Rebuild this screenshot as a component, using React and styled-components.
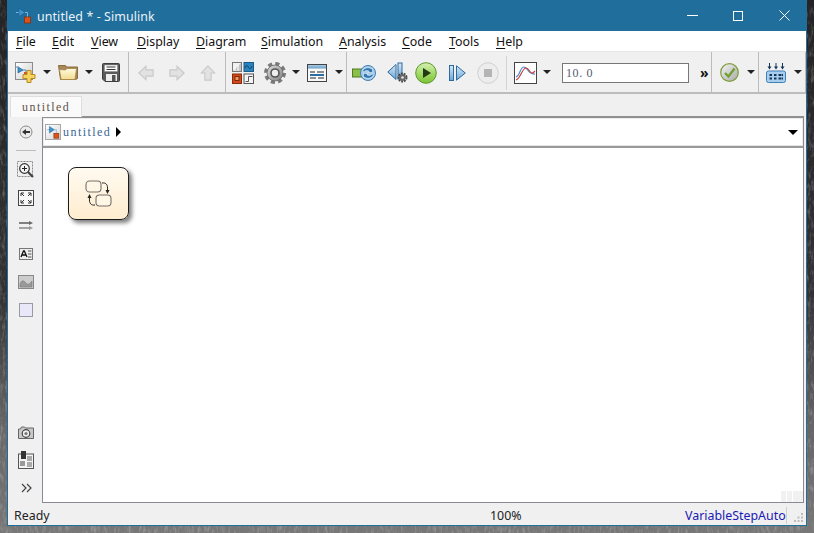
import React from "react";
import styled, { createGlobalStyle } from "styled-components";

const Global = createGlobalStyle`
  html, body { margin: 0; padding: 0; width: 814px; height: 533px; overflow: hidden; background: #444; }
  * { box-sizing: border-box; }
`;

const UI = `"Noto Sans", "Open Sans", sans-serif`;
const SIM = `"Liberation Serif", serif`;

const Desktop = styled.div`
  position: relative; width: 814px; height: 533px; overflow: hidden; padding-left: 7px;
`;
const WallpaperSvg = styled.svg`position: absolute; inset: 0;`;
const Win = styled.div`
  position: relative; width: 800px; height: 526px; display: flex; flex-direction: column;
  background: #f0f0f0; border: 1px solid #1f6e9c; border-top: 0;
`;
const TitleBar = styled.div`
  height: 31px; flex: none; background: #1f6e9c; display: flex; align-items: center; padding-left: 9px; margin: 0 -1px;
  color: #eaf2f7; font: 12.4px ${UI};
`;
const TitleText = styled.span`margin: 1px 0 0 5px; flex: 1; letter-spacing: 0.1px;`;
const WinButton = styled.span`
  width: 46px; height: 31px; display: flex; align-items: center; justify-content: center; flex: none;
`;
const MenuBar = styled.nav`
  height: 20px; flex: none; background: #fff; display: flex; align-items: center; padding-left: 8px;
  font: 12.4px ${UI}; color: #111;
`;
const MenuItem = styled.span`
  width: ${p => p.$w}px; flex: none;
  u { text-underline-offset: 2px; text-decoration-thickness: 1px; }
`;
const Toolbar = styled.div`
  height: 43px; flex: none; display: flex; background: #f0f0f0; border-top: 1px solid #e6e6e6; border-bottom: 2px solid #bcbcbc;
`;
const ToolGroup = styled.div`
  width: ${p => p.$w}px; flex: none; display: flex; align-items: center; padding-top: 1px; border-right: 1px solid #bcbcbc;
`;
const Tool = styled.svg`
  flex: none; margin-left: ${p => p.$ml || 0}px; display: block;
`;
const Caret = styled.span`
  flex: none; margin-left: ${p => p.$ml}px; width: 0; height: 0; margin-top: -1px;
  border-left: 4px solid transparent; border-right: 4px solid transparent; border-top: 4px solid #222;
`;
const ShortDivider = styled.span`
  flex: none; margin-left: 7px; width: 1px; height: 34px; background: #d4d4d4;
`;
const TimeInput = styled.div`
  flex: none; margin-left: 11px; width: 127px; height: 20px; border: 1px solid #777; background: #fff;
  font: 12px ${SIM}; color: #555b6e; padding-left: 3px; line-height: 18px; letter-spacing: 0.6px;
`;
const More = styled.span`
  flex: none; margin-left: 11px; font: bold 14px ${UI}; color: #111; width: 9px; line-height: 14px;
`;
const TabStrip = styled.div`height: 22px; flex: none; padding-left: 2px; display: flex; align-items: flex-start;`;
const Tab = styled.div`
  width: 72px; height: 21px; margin-top: 2px; background: #fafafa; border: 1px solid #dedede; border-bottom: 0;
  font: 12px ${SIM}; letter-spacing: 1.45px; color: #5f5347; padding: 3px 0 0 11px; position: relative; z-index: 1;
`;
const Main = styled.div`flex: 1; min-height: 0; display: flex;`;
const Palette = styled.aside`
  width: 34px; flex: none; display: flex; flex-direction: column; align-items: center; padding: 2px 0 1px 2px;
`;
const PaletteCell = styled.div`
  height: 28px; flex: none; width: 100%; display: flex; align-items: center; justify-content: center;
`;
const PaletteRule = styled.div`width: 20px; height: 1px; background: #bdbdbd; margin: 4px 0 5px; flex: none;`;
const Spacer = styled.div`flex: 1;`;
const Editor = styled.div`
  width: 762px; flex: none; display: flex; flex-direction: column;
  border: 1px solid #8a8a94; border-top: 2px solid #909090;
`;
const Breadcrumb = styled.div`
  height: 28px; flex: none; background: #fff; display: flex; align-items: center; padding-left: 1px; padding-right: 4px;
  border: 1px solid #ececec; border-bottom: 1px solid #e4e4e4;
`;
const CrumbLogo = styled.span`
  width: 16px; height: 16px; flex: none; border: 1px solid #a8a8a8; background: linear-gradient(135deg, #fff, #d8d8d8);
  display: flex; align-items: center; justify-content: center;
`;
const CrumbText = styled.span`
  font: 12px ${SIM}; letter-spacing: 1.45px; color: #3a6694; margin-left: 2px;
`;
const CrumbArrow = styled.span`
  margin-left: 5px; width: 0; height: 0; border-top: 5px solid transparent; border-bottom: 5px solid transparent; border-left: 5px solid #000;
`;
const CrumbDrop = styled.span`
  margin-left: auto; width: 0; height: 0; border-left: 5px solid transparent; border-right: 5px solid transparent; border-top: 5px solid #000;
`;
const Canvas = styled.div`
  flex: 1; background: #fff; position: relative; border-top: 2px solid #9a9a9a; padding: 19px 0 0 25px;
`;
const ChartBlock = styled.div`
  width: 61px; height: 53px; border: 1px solid #1c1c1c; border-radius: 8px;
  background: linear-gradient(#fffaf0, #ffedcf); box-shadow: 3px 3px 4px #7d7d7d;
  display: flex; align-items: center; justify-content: center;
`;
const ViewMark = styled.div`
  position: absolute; right: 0; bottom: 0; display: flex; gap: 1px;
`;
const ViewMarkCell = styled.span`width: ${p => p.$w}px; height: 11px; background: #f1f1f1;`;
const StatusBar = styled.footer`
  height: 22px; flex: none; display: flex; align-items: center; font: 12.4px ${UI}; color: #222; padding: 2px 0 0 6px; position: relative;
`;
const Ready = styled.span`width: 476px; flex: none;`;
const Zoom = styled.span`width: 195px; flex: none;`;
const Solver = styled.span`color: #1a1ab4; width: 102px; flex: none; border-right: 1px solid #d0d0d0; white-space: nowrap;`;
const Grip = styled.svg`margin-left: 7px; margin-top: 5px; flex: none;`;

const Wallpaper = () => (
  <WallpaperSvg width="814" height="533">
    <defs>
      <linearGradient id="wp" x1="0" y1="0" x2="0" y2="1">
        <stop offset="0" stopColor="#242426" />
        <stop offset="0.55" stopColor="#323234" />
        <stop offset="0.8" stopColor="#666" />
        <stop offset="1" stopColor="#777" />
      </linearGradient>
      <filter id="grain" x="0" y="0" width="100%" height="100%">
        <feTurbulence type="fractalNoise" baseFrequency="0.35 0.12" numOctaves="3" seed="4" />
        <feColorMatrix values="0 0 0 0 0.85  0 0 0 0 0.85  0 0 0 0 0.85  1.6 0 0 0 -0.75" />
      </filter>
    </defs>
    <rect width="814" height="533" fill="url(#wp)" />
    <rect width="814" height="533" filter="url(#grain)" opacity="0.4" />
  </WallpaperSvg>
);

const SimLogo = ({ size = 16 }) => (
  <svg width={size} height={size} viewBox="0 0 16 16">
    <path d="M0 4.500h4" stroke="#7fb4d8" strokeWidth="1" />
    <path d="M3 0.500 L9 4.500 L3 8.500Z" fill="#3f94cf" stroke="#1c5f92" strokeWidth="0.6" />
    <path d="M9 4.500h2.500v4.500" stroke="#7fb4d8" fill="none" strokeWidth="1" />
    <rect x="8.500" y="9" width="6" height="6" fill="#d9541e" stroke="#8c2c08" strokeWidth="0.8" />
  </svg>
);

const NewModelIcon = () => (
  <Tool $ml={7} width="21" height="21" viewBox="0 0 21 21">
    <defs><linearGradient id="nm" x1="0" y1="0" x2="1" y2="1"><stop offset="0" stopColor="#fff" /><stop offset="1" stopColor="#cfcfcf" /></linearGradient></defs>
    <rect x="0.5" y="0.5" width="17" height="17" fill="url(#nm)" stroke="#8a8a8a" />
    <path d="M3 5 L8 8 L3 11Z" fill="#3a94d0" stroke="#1c5f92" strokeWidth="0.7" />
    <path d="M1 5h3M8 8h3v2" stroke="#4f8fbf" fill="none" />
    <rect x="9" y="10" width="4" height="3" fill="#d6532a" />
    <path d="M12 8.5h4v4h4v4h-4v4h-4v-4H8v-4h4z" fill="#f7d360" stroke="#b98a1e" />
  </Tool>
);
const FolderIcon = () => (
  <Tool $ml={7} width="20" height="15" viewBox="0 0 20 15">
    <defs><linearGradient id="fo" x1="0" y1="0" x2="0" y2="1"><stop offset="0" stopColor="#fffbe0" /><stop offset="1" stopColor="#f2dc8f" /></linearGradient></defs>
    <path d="M0.500 0.500h7l1 1.500h11v11.500L17.500 14.500h-15z" fill="#a8875a" stroke="#8a6d3c" />
    <path d="M1.500 4.500 L7.500 5 9 3.500 18.500 3.500 17 14.500H3z" fill="url(#fo)" stroke="#a5854a" strokeWidth="0.8" />
  </Tool>
);
const SaveIcon = () => (
  <Tool $ml={9} width="18" height="19" viewBox="0 0 18 19">
    <path d="M0.5 1.5a1 1 0 0 1 1-1h15a1 1 0 0 1 1 1v16a1 1 0 0 1-1 1H3l-2.500-2.500z" fill="#5a5a5a" stroke="#3e3e3e" />
    <rect x="2.500" y="2" width="13" height="6.500" fill="#fff" stroke="#888" strokeWidth="0.500" />
    <path d="M4.500 4h9M4.500 6.500h9" stroke="#333" />
    <rect x="4" y="11" width="11" height="7" fill="#ededed" />
    <rect x="10" y="12" width="3.500" height="6" fill="#555" />
  </Tool>
);
const NavArrow = ({ ml, dir }) => {
  const rot = dir === "left" ? 0 : dir === "right" ? 180 : 90;
  const w = dir === "up" ? 16 : 18;
  const h = dir === "up" ? 18 : 16;
  return (
    <Tool $ml={ml} width={w} height={h} viewBox="0 0 18 18">
      <path transform={`rotate(${rot} 9 9)`} d="M1 9 L9 1.500 V5.500 H17 V12.500 H9 V16.500Z" fill="#e2e2e2" stroke="#c8c8c8" strokeWidth="1.200" />
    </Tool>
  );
};
const LibraryIcon = () => (
  <Tool $ml={6} width="22" height="22" viewBox="0 0 22 22">
    <rect x="0.500" y="0.500" width="9" height="9" fill="#f1f1f1" stroke="#777" />
    <path d="M1 9 L9 1V9Z" fill="#c4c4c4" />
    <path d="M3 9V5M6 9V3" stroke="#fff" />
    <rect x="12" y="0.500" width="9.500" height="9" fill="#2b83bd" stroke="#1b5b88" />
    <path d="M13 6c2-5 3-1 4 0s2 1 3-2" fill="none" stroke="#0f3e63" />
    <rect x="0.500" y="12" width="9" height="9.500" fill="#d2481c" stroke="#8a2c0c" />
    <rect x="3" y="14.500" width="4" height="4" fill="#ed9a63" stroke="#7d2a0c" />
    <rect x="12" y="12" width="9.500" height="9.500" fill="#f4f4f4" stroke="#555" />
    <path d="M13.500 19.500h3v-5h4" fill="none" stroke="#555" />
  </Tool>
);
const GearIcon = () => (
  <Tool $ml={10} width="22" height="22" viewBox="0 0 22 22">
    <defs><linearGradient id="ge" x1="0" y1="0" x2="1" y2="1"><stop offset="0" stopColor="#dcdcdc" /><stop offset="1" stopColor="#808080" /></linearGradient></defs>
    <circle cx="11" cy="11" r="9" fill="none" stroke="#7a7a7a" strokeWidth="4" strokeDasharray="4 3.070" />
    <circle cx="11" cy="11" r="8" fill="url(#ge)" stroke="#666" strokeWidth="0.8" />
    <circle cx="11" cy="11" r="4.800" fill="#555" />
    <circle cx="11" cy="11" r="3.200" fill="#efefef" />
  </Tool>
);
const ExplorerIcon = () => (
  <Tool $ml={7} width="20" height="18" viewBox="0 0 20 18">
    <defs><linearGradient id="ex" x1="0" y1="0" x2="0" y2="1"><stop offset="0" stopColor="#a8cbe4" /><stop offset="1" stopColor="#6d9fc6" /></linearGradient></defs>
    <rect x="0.500" y="0.500" width="19" height="17" fill="#f8f8f8" stroke="#444" />
    <rect x="1" y="1" width="18" height="3.500" fill="url(#ex)" />
    <path d="M3 8h5M10 8h7M3 14h6M11 14h6" stroke="#222" />
    <path d="M3 11h14" stroke="#2c6ea4" strokeWidth="2" />
  </Tool>
);
const UpdateIcon = () => (
  <Tool $ml={5} width="24" height="18" viewBox="0 0 24 18">
    <rect x="0.500" y="5" width="11" height="8" fill="#8cbe4a" stroke="#4f7a1e" />
    <circle cx="16" cy="9" r="7.500" fill="#a8cdec" stroke="#3b7fb5" />
    <path d="M10.500 7c1.500-3 6-4.500 9-2l1-1v4.500h-4.500l1.200-1.200c-2-1.500-4.500-.6-5.200.7z" fill="#2f76b0" stroke="#fff" strokeWidth="0.500" />
    <path d="M21.500 11c-1.500 3-6 4.500-9 2l-1 1V9.500H16l-1.200 1.200c2 1.500 4.500.6 5.200-.7z" fill="#2f76b0" stroke="#fff" strokeWidth="0.500" />
  </Tool>
);
const StepBackIcon = () => (
  <Tool $ml={11} width="21" height="21" viewBox="0 0 21 21">
    <defs><linearGradient id="sb" x1="0" y1="0" x2="0" y2="1"><stop offset="0" stopColor="#d6e8f6" /><stop offset="1" stopColor="#6ba6d6" /></linearGradient></defs>
    <path d="M0.800 10 L9 2.500V17.500Z" fill="url(#sb)" stroke="#2d6a9f" />
    <rect x="11" y="1" width="4" height="16" fill="url(#sb)" stroke="#2d6a9f" />
    <circle cx="15.500" cy="15.500" r="4" fill="none" stroke="#444" strokeWidth="2" strokeDasharray="1.800 1" />
    <circle cx="15.500" cy="15.500" r="3.400" fill="#666" />
    <circle cx="15.500" cy="15.500" r="1.300" fill="#e5e5e5" />
  </Tool>
);
const PlayIcon = () => (
  <Tool $ml={7} width="22" height="22" viewBox="0 0 22 22">
    <defs><linearGradient id="pl" x1="0" y1="0" x2="0" y2="1"><stop offset="0" stopColor="#d8f0b4" /><stop offset="0.6" stopColor="#9cd65e" /><stop offset="1" stopColor="#7cc238" /></linearGradient></defs>
    <circle cx="11" cy="11" r="10.300" fill="url(#pl)" stroke="#5c9a2a" />
    <path d="M8 6 L16 11 L8 16Z" fill="#233a12" />
  </Tool>
);
const StepForwardIcon = () => (
  <Tool $ml={12} width="17" height="16" viewBox="0 0 17 16">
    <defs><linearGradient id="sf" x1="0" y1="0" x2="0" y2="1"><stop offset="0" stopColor="#d6e8f6" /><stop offset="1" stopColor="#6ba6d6" /></linearGradient></defs>
    <rect x="0.500" y="0.500" width="4" height="15" fill="url(#sf)" stroke="#2d6a9f" />
    <path d="M7.500 0.800 L16.300 8 L7.500 15.200Z" fill="url(#sf)" stroke="#2d6a9f" />
  </Tool>
);
const StopIcon = () => (
  <Tool $ml={11} width="22" height="22" viewBox="0 0 22 22">
    <circle cx="11" cy="11" r="10.300" fill="#ededed" stroke="#d0d0d0" />
    <rect x="7" y="7" width="8" height="8" fill="#b4b4b4" />
  </Tool>
);
const ScopeIcon = () => (
  <Tool $ml={7} width="23" height="22" viewBox="0 0 23 22">
    <rect x="0.500" y="0.500" width="22" height="21" fill="#fff" stroke="#444" />
    <path d="M2 15c4-1 4-10 8-10s4 8 11 7" fill="none" stroke="#4a8ad0" strokeWidth="1.200" />
    <path d="M2 18c5-2 6-12 10-12s4 9 9 3" fill="none" stroke="#c9403a" strokeWidth="1.200" />
  </Tool>
);
const CheckIcon = () => (
  <Tool $ml={8} width="19" height="19" viewBox="0 0 19 19">
    <defs><linearGradient id="ck" x1="0" y1="0" x2="1" y2="1"><stop offset="0" stopColor="#f5f5f5" /><stop offset="1" stopColor="#a8a8a8" /></linearGradient></defs>
    <circle cx="9.500" cy="9.500" r="8.800" fill="url(#ck)" stroke="#7f9c3e" strokeWidth="1.200" />
    <path d="M5 10 L8.500 13.500 L14.500 5.500" fill="none" stroke="#6fa030" strokeWidth="2.400" />
  </Tool>
);
const SampleIcon = () => (
  <Tool $ml={7} width="20" height="20" viewBox="0 0 20 20">
    <rect x="0.500" y="8" width="19" height="11.500" rx="2" fill="#a9cdec" stroke="#3d7fb6" />
    <g fill="#12365a">
      {[3.500, 8, 12.500].map(x => [11, 14.500].map(y => <rect key={x + "-" + y} x={x} y={y} width="2.500" height="2" />))}
      <rect x="15.500" y="11" width="1.500" height="2" />
      <rect x="15.500" y="14.500" width="1.500" height="2" />
    </g>
    <path d="M3.500 0v4M10 0v4M16.500 0v4" stroke="#12365a" />
    <path d="M1.500 3.500h4l-2 3zM8 3.500h4l-2 3zM14.500 3.500h4l-2 3z" fill="#12365a" />
  </Tool>
);

const BackIcon = () => (
  <svg width="14" height="14" viewBox="0 0 14 14">
    <circle cx="7" cy="7" r="6" fill="#ececec" stroke="#8a8a8a" />
    <path d="M3 7 L7 4V6H11V8H7V10Z" fill="#333" />
  </svg>
);
const ZoomIcon = () => (
  <svg width="18" height="18" viewBox="0 0 18 18">
    <rect x="0.500" y="0.500" width="15" height="15" fill="none" stroke="#888" strokeDasharray="2 1" />
    <circle cx="7.500" cy="7.500" r="4.800" fill="#f5f5f5" stroke="#333" strokeWidth="1.200" />
    <path d="M5 7.500h5M7.500 5v5" stroke="#222" />
    <path d="M11 11 L16 16" stroke="#444" strokeWidth="2.200" />
  </svg>
);
const FitIcon = () => (
  <svg width="16" height="16" viewBox="0 0 16 16">
    <rect x="0.500" y="0.500" width="15" height="15" fill="#f8f8f8" stroke="#444" />
    <path d="M3 3l3 3M3 3h3M3 3v3M13 3l-3 3M13 3h-3M13 3v3M3 13l3-3M3 13h3M3 13v-3M13 13l-3-3M13 13h-3M13 13v-3" stroke="#333" fill="none" />
  </svg>
);
const ArrowsIcon = () => (
  <svg width="16" height="12" viewBox="0 0 16 12">
    <path d="M1 3h12" stroke="#111" />
    <path d="M1 8h12" stroke="#555" />
    <path d="M11 1l4 2-4 2z" fill="#666" />
    <path d="M11 6l4 2-4 2z" fill="#999" />
  </svg>
);
const TextIcon = () => (
  <svg width="14" height="12" viewBox="0 0 14 12">
    <rect x="0.500" y="0.500" width="13" height="11" fill="#eee" stroke="#777" />
    <path d="M2 9l2.500-6h.8L8 9M3 7h4" fill="none" stroke="#111" strokeWidth="1.300" />
    <path d="M9 3h3.500M9 6h3.500M9 9h3.500" stroke="#555" />
  </svg>
);
const ImageIcon = () => (
  <svg width="16" height="14" viewBox="0 0 16 14">
    <rect x="0.500" y="0.500" width="15" height="13" fill="#ccc" stroke="#888" />
    <path d="M2 9c2-5 4-3 6-1s3 2 6-2v6H2z" fill="#9a9a9a" stroke="#777" strokeWidth="0.600" />
  </svg>
);
const AreaIcon = () => (
  <svg width="14" height="14" viewBox="0 0 14 14">
    <rect x="0.500" y="0.500" width="13" height="13" fill="#e8e8f8" stroke="#9a9aa6" />
  </svg>
);
const CameraIcon = () => (
  <svg width="16" height="13" viewBox="0 0 16 13">
    <path d="M0.500 3h2l1-2h3l1 1h8v10.500H.500z" fill="#c8c8c8" stroke="#666" />
    <circle cx="8" cy="7.500" r="3.800" fill="#eee" stroke="#444" strokeWidth="1.200" />
    <circle cx="8" cy="7.500" r="1.600" fill="#777" />
  </svg>
);
const BlockMapIcon = () => (
  <svg width="16" height="18" viewBox="0 0 16 18">
    <rect x="0.500" y="3" width="15" height="14.500" fill="#f3f3f3" stroke="#555" />
    <rect x="3" y="0" width="5" height="8" fill="#333" />
    <rect x="2" y="10" width="5" height="5" fill="#999" />
    <rect x="9" y="5" width="5" height="5" fill="#aaa" />
    <rect x="9" y="11" width="5" height="5" fill="#aaa" />
  </svg>
);
const ChevronIcon = () => (
  <svg width="11" height="10" viewBox="0 0 11 10">
    <path d="M1 1l4 4-4 4M6 1l4 4-4 4" fill="none" stroke="#444" strokeWidth="1.200" />
  </svg>
);
const ChartIcon = () => (
  <svg width="27" height="28" viewBox="0 0 27 28">
    <rect x="1" y="1" width="15" height="11" rx="3.500" fill="#fff7e6" stroke="#77706a" strokeWidth="1.100" />
    <rect x="11" y="15" width="15" height="11" rx="3.500" fill="#fff7e6" stroke="#77706a" strokeWidth="1.100" />
    <path d="M17 3c4-.5 6 1.500 5.500 7" fill="none" stroke="#222" />
    <path d="M20.500 10h4l-2 4z" fill="#222" />
    <path d="M10 25c-4 .5-6-1.500-5.500-7" fill="none" stroke="#222" />
    <path d="M2.500 18h4l-2-4z" fill="#222" />
  </svg>
);

const menus = [
  ["File", 36], ["Edit", 39], ["View", 46], ["Display", 59], ["Diagram", 65],
  ["Simulation", 78], ["Analysis", 63], ["Code", 47], ["Tools", 47], ["Help", 40],
];

export default function App() {
  return (
    <>
      <Global />
      <Desktop>
        <Wallpaper />
        <Win>
          <TitleBar>
            <SimLogo />
            <TitleText>untitled * - Simulink</TitleText>
            <WinButton>
              <svg width="11" height="3" viewBox="0 0 11 3"><path d="M0 1.500h11" stroke="#fff" /></svg>
            </WinButton>
            <WinButton>
              <svg width="10" height="10" viewBox="0 0 10 10"><rect x="0.500" y="0.500" width="9" height="9" fill="none" stroke="#fff" /></svg>
            </WinButton>
            <WinButton>
              <svg width="11" height="11" viewBox="0 0 11 11"><path d="M.5.500l10 10M10.500.500l-10 10" stroke="#fff" /></svg>
            </WinButton>
          </TitleBar>
          <MenuBar>
            {menus.map(([m, w]) => (
              <MenuItem key={m} $w={w}><u>{m[0]}</u>{m.slice(1)}</MenuItem>
            ))}
          </MenuBar>
          <Toolbar>
            <ToolGroup $w={121}>
              <NewModelIcon /><Caret $ml={7} /><FolderIcon /><Caret $ml={7} /><SaveIcon />
            </ToolGroup>
            <ToolGroup $w={97}>
              <NavArrow ml={8} dir="left" /><NavArrow ml={13} dir="right" /><NavArrow ml={14} dir="up" />
            </ToolGroup>
            <ToolGroup $w={121}>
              <LibraryIcon /><GearIcon /><Caret $ml={6} /><ExplorerIcon /><Caret $ml={8} />
            </ToolGroup>
            <ToolGroup $w={365}>
              <UpdateIcon /><StepBackIcon /><PlayIcon /><StepForwardIcon /><StopIcon /><ShortDivider />
              <ScopeIcon /><Caret $ml={6} /><TimeInput>10. 0</TimeInput><More>»</More>
            </ToolGroup>
            <ToolGroup $w={47}>
              <CheckIcon /><Caret $ml={8} />
            </ToolGroup>
            <ToolGroup $w={47}>
              <SampleIcon /><Caret $ml={8} />
            </ToolGroup>
          </Toolbar>
          <TabStrip><Tab>untitled</Tab></TabStrip>
          <Main>
            <Palette>
              <PaletteCell><BackIcon /></PaletteCell>
              <PaletteRule />
              <PaletteCell><ZoomIcon /></PaletteCell>
              <PaletteCell><FitIcon /></PaletteCell>
              <PaletteCell><ArrowsIcon /></PaletteCell>
              <PaletteCell><TextIcon /></PaletteCell>
              <PaletteCell><ImageIcon /></PaletteCell>
              <PaletteCell><AreaIcon /></PaletteCell>
              <Spacer />
              <PaletteCell><CameraIcon /></PaletteCell>
              <PaletteCell><BlockMapIcon /></PaletteCell>
              <PaletteCell><ChevronIcon /></PaletteCell>
            </Palette>
            <Editor>
              <Breadcrumb>
                <CrumbLogo><SimLogo size={13} /></CrumbLogo>
                <CrumbText>untitled</CrumbText>
                <CrumbArrow />
                <CrumbDrop />
              </Breadcrumb>
              <Canvas>
                <ChartBlock><ChartIcon /></ChartBlock>
                <ViewMark><ViewMarkCell $w={5} /><ViewMarkCell $w={5} /><ViewMarkCell $w={10} /></ViewMark>
              </Canvas>
            </Editor>
          </Main>
          <StatusBar>
            <Ready>Ready</Ready>
            <Zoom>100%</Zoom>
            <Solver>VariableStepAuto</Solver>
            <Grip width="9" height="9" viewBox="0 0 9 9">
              <path d="M7 0h2v2H7zM3.500 3.500h2v2h-2zM7 3.500h2v2H7zM0 7h2v2H0zM3.500 7h2v2h-2zM7 7h2v2H7z" fill="#bdbdbd" />
            </Grip>
          </StatusBar>
        </Win>
      </Desktop>
    </>
  );
}
